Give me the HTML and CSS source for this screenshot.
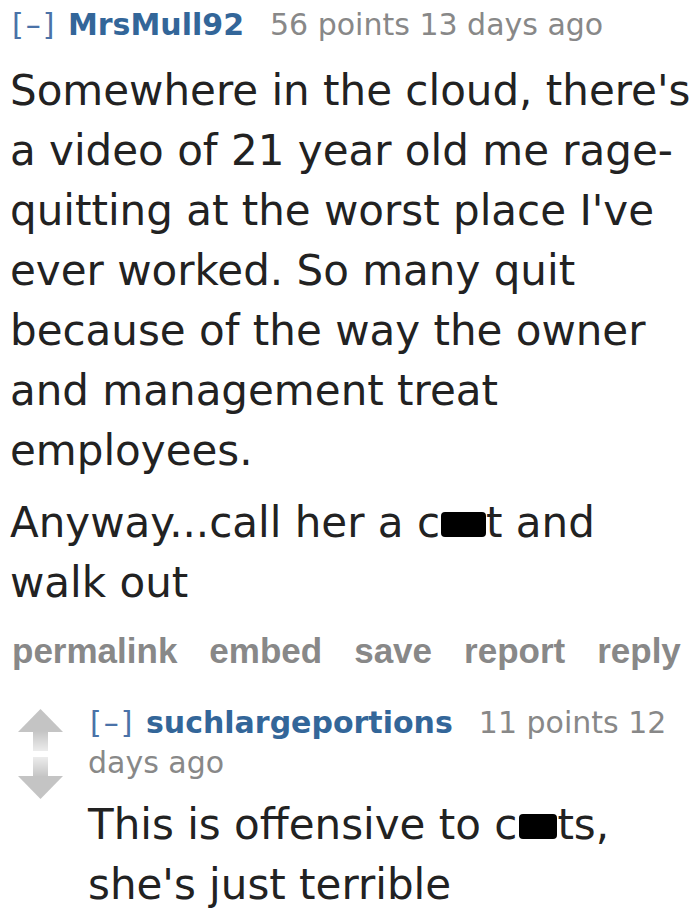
FILE: index.html
```html
<!DOCTYPE html>
<html>
<head>
<meta charset="utf-8">
<link rel="stylesheet" href="styles.css">
</head>
<body>
<div class="comment">
  <p class="tagline"><span class="expand">[–]</span> <span class="author">MrsMull92</span><span class="meta">56 points 13 days ago</span></p>
  <div class="md">
    <p>Somewhere in the cloud, there's a video of 21 year old me rage-quitting at the worst place I've ever worked. So many quit because of the way the owner and management treat employees.</p>
    <p>Anyway...call her a c<span class="redact r1"></span>t and walk out</p>
  </div>
  <ul class="buttons">
    <li>permalink</li>
    <li>embed</li>
    <li>save</li>
    <li>report</li>
    <li>reply</li>
  </ul>
</div>
<div class="child">
  <div class="votes">
    <svg class="arrow" width="45" height="42" viewBox="0 0 45 42">
      <defs>
        <linearGradient id="gu" x1="0" y1="0" x2="0" y2="1">
          <stop offset="0" stop-color="#c4c4c4"/>
          <stop offset="1" stop-color="#ececec"/>
        </linearGradient>
      </defs>
      <polygon points="22.5,0 45,23 0,23" fill="#c4c4c4"/>
      <rect x="15" y="22" width="15" height="20" fill="url(#gu)"/>
    </svg>
    <svg class="arrow" width="45" height="42" viewBox="0 0 45 42">
      <defs>
        <linearGradient id="gd" x1="0" y1="0" x2="0" y2="1">
          <stop offset="0" stop-color="#ececec"/>
          <stop offset="1" stop-color="#c4c4c4"/>
        </linearGradient>
      </defs>
      <rect x="15" y="0" width="15" height="20" fill="url(#gd)"/>
      <polygon points="0,19 45,19 22.5,42" fill="#c4c4c4"/>
    </svg>
  </div>
  <div class="entry">
    <p class="tagline"><span class="expand">[–]</span> <span class="author">suchlargeportions</span><span class="meta">11 points 12 days ago</span></p>
    <div class="md">
      <p>This is offensive to c<span class="redact r2"></span>ts, she's just terrible</p>
    </div>
  </div>
</div>
</body>
</html>
```
FILE: styles.css
```css
html, body {
  margin: 0;
  padding: 0;
  background: #ffffff;
}
body {
  width: 700px;
  font-family: "DejaVu Sans", Verdana, sans-serif;
}
p { margin: 0; }
.comment {
  padding: 5px 0 0 10px;
}
.tagline {
  font-size: 30px;
  line-height: 40px;
  color: #888888;
}
.expand {
  color: #4a72a8;
  padding-left: 2px;
  letter-spacing: 2px;
}
.author {
  color: #336699;
  font-weight: bold;
  margin-left: 2px;
}
.meta {
  margin-left: 26px;
}
.md {
  color: #222222;
  font-size: 42px;
  line-height: 60px;
  margin-top: 16px;
}
.md p + p {
  margin-top: 12px;
}
.redact {
  display: inline-block;
  background: #000000;
  height: 25px;
  border-radius: 4px;
  vertical-align: baseline;
}
.r1 { width: 45px; margin-left: 1px; }
.r2 { width: 38px; margin-left: 2px; }
.buttons {
  list-style: none;
  margin: 18px 0 0 2px;
  padding: 0;
  display: flex;
  gap: 32px;
  font-family: "Liberation Sans", Arial, sans-serif;
  font-weight: bold;
  font-size: 35px;
  line-height: 40px;
  color: #888888;
}
.child {
  display: flex;
  margin-top: 32px;
  padding-left: 18px;
}
.votes {
  display: flex;
  flex-direction: column;
  gap: 6px;
  width: 45px;
  margin-right: 25px;
  padding-top: 6px;
}
.arrow { display: block; }
.entry {
  flex: 1;
}
.entry .md {
  margin-top: 12px;
}
```
